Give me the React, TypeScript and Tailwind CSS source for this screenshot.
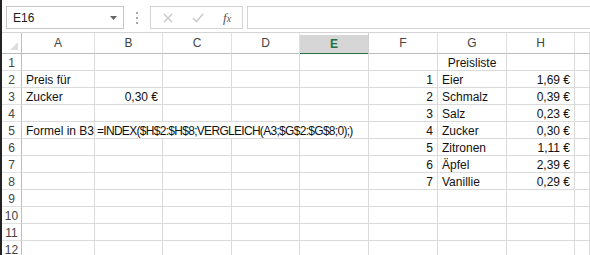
import React from "react";

const cols = ["A", "B", "C", "D", "E", "F", "G", "H", ""];

type Cell = { text: string; align?: "left" | "right" | "center"; spill?: boolean };

// row number -> column index (0 = A) -> cell
const data: Record<number, Record<number, Cell>> = {
  1: { 6: { text: "Preisliste", align: "center" } },
  2: { 0: { text: "Preis für" }, 5: { text: "1", align: "right" }, 6: { text: "Eier" }, 7: { text: "1,69 €", align: "right" } },
  3: {
    0: { text: "Zucker" },
    1: { text: "0,30 €", align: "right" },
    5: { text: "2", align: "right" },
    6: { text: "Schmalz" },
    7: { text: "0,39 €", align: "right" },
  },
  4: { 5: { text: "3", align: "right" }, 6: { text: "Salz" }, 7: { text: "0,23 €", align: "right" } },
  5: {
    0: { text: "Formel in B3" },
    1: { text: "=INDEX($H$2:$H$8;VERGLEICH(A3;$G$2:$G$8;0);)", spill: true },
    5: { text: "4", align: "right" },
    6: { text: "Zucker" },
    7: { text: "0,30 €", align: "right" },
  },
  6: { 5: { text: "5", align: "right" }, 6: { text: "Zitronen" }, 7: { text: "1,11 €", align: "right" } },
  7: { 5: { text: "6", align: "right" }, 6: { text: "Äpfel" }, 7: { text: "2,39 €", align: "right" } },
  8: { 5: { text: "7", align: "right" }, 6: { text: "Vanillie" }, 7: { text: "0,29 €", align: "right" } },
};

const rows = Array.from({ length: 12 }, (_, i) => i + 1);

const FormulaBar = () => (
  <div className="flex h-[33px] items-start border-b border-[#d4d4d4] bg-white pt-[6px]">
    <div className="ml-[4px] flex h-[23px] w-[118px] items-center justify-between border border-[#c6c6c6] pl-[6px] pr-[6px] text-[12px] text-[#222]">
      <span>E16</span>
      <svg width="7" height="4" viewBox="0 0 7 4">
        <path d="M0 0 L7 0 L3.5 4 Z" fill="#666" />
      </svg>
    </div>
    <div className="flex w-[26px] flex-col items-center gap-[3px] pt-[6px]">
      <span className="h-[2px] w-[2px] bg-[#aaa]" />
      <span className="h-[2px] w-[2px] bg-[#aaa]" />
      <span className="h-[2px] w-[2px] bg-[#aaa]" />
    </div>
    <div className="flex h-[23px] w-[93px] items-center border border-[#d4d4d4] px-[9px]">
      <svg width="10" height="10" viewBox="0 0 10 10" className="ml-[3px]">
        <path d="M1 1 L9 9 M9 1 L1 9" stroke="#c4c4c4" strokeWidth="1.2" />
      </svg>
      <svg width="12" height="10" viewBox="0 0 12 10" className="ml-[19px]">
        <path d="M1 5 L4.5 8.5 L11 1" stroke="#c4c4c4" strokeWidth="1.3" fill="none" />
      </svg>
      <span className="ml-[19px] font-['Liberation_Serif'] text-[13px] italic text-[#555]">
        f<span className="text-[10px]">x</span>
      </span>
    </div>
    <div className="ml-[4px] h-[23px] flex-1 border-y border-l border-[#d4d4d4]" />
  </div>
);

export default function App() {
  return (
    <div className="h-[255px] w-[590px] overflow-hidden border-l-2 border-[#222] bg-white font-['Liberation_Sans',sans-serif] text-[12px] text-[#111]">
      <FormulaBar />
      <div className="grid grid-cols-[20px_73px_68px_69px_68px_69px_69px_69px_68px_1fr]">
        {/* header row */}
        <div className="relative h-[21px] border-b border-r border-[#bdbdbd]">
          <svg width="8" height="8" viewBox="0 0 8 8" className="absolute right-[3px] bottom-[3px]">
            <path d="M8 0 L8 8 L0 8 Z" fill="#dcdcdc" />
          </svg>
        </div>
        {cols.map((c, i) =>
          c === "E" ? (
            <div key={i} className="flex h-[21px] flex-col border-r border-[#d0d0d0]">
              <div className="h-[2px] bg-white" />
              <div className="flex flex-1 items-center justify-center bg-[#d6d6d6] text-[12px] font-bold text-[#217346]">
                {c}
              </div>
              <div className="h-[2px] bg-[#217346]" />
            </div>
          ) : (
            <div
              key={i}
              className="flex h-[21px] items-center justify-center border-b border-r border-[#bdbdbd] border-r-[#e0e0e0] text-[12px] text-[#444]"
            >
              {c}
            </div>
          )
        )}
        {rows.map((r) => (
          <React.Fragment key={r}>
            <div className="flex h-[17px] items-center justify-center border-b border-r border-[#bdbdbd] border-b-[#e0e0e0] pt-[1px] text-[12px] text-[#444]">
              {r}
            </div>
            {cols.map((_, ci) => {
              const cell = data[r]?.[ci];
              const spilled = data[r]?.[1]?.spill && ci >= 1 && ci <= 4;
              const border = spilled && ci < 4 ? "border-b" : "border-b border-r";
              return (
                <div
                  key={ci}
                  className={`relative h-[17px] ${border} border-[#dadada] ${
                    cell?.align === "right" ? "text-right" : cell?.align === "center" ? "text-center" : "text-left"
                  } px-[4px] pt-[1px] leading-[16px]`}
                >
                  {cell &&
                    (cell.spill ? (
                      <span className="absolute left-[2px] top-[1px] whitespace-nowrap tracking-[-0.7px]">{cell.text}</span>
                    ) : (
                      <span className="whitespace-nowrap">{cell.text}</span>
                    ))}
                </div>
              );
            })}
          </React.Fragment>
        ))}
      </div>
    </div>
  );
}
